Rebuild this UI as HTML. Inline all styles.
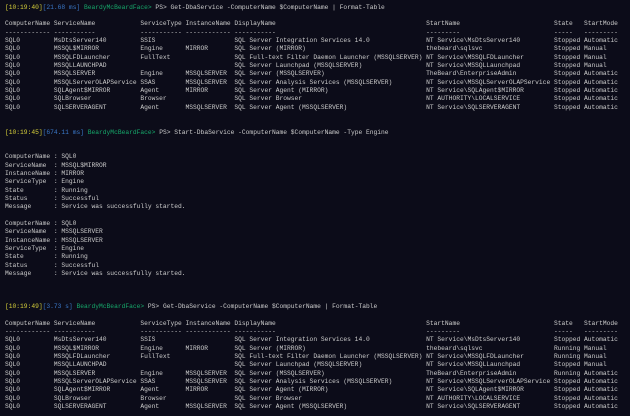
<!DOCTYPE html>
<html><head><meta charset="utf-8"><style>
html,body{margin:0;padding:0;background:#0c0c19;width:630px;height:416px;overflow:hidden}
pre{margin:0;position:absolute;left:5px;top:3.85px;font-family:"Liberation Mono",monospace;font-size:6.28px;line-height:8.306px;color:#cccccc;letter-spacing:0;white-space:pre}
.y{color:#d6cf3a}.b{color:#3a78c8}.g{color:#16a86a}
</style></head><body><pre><span class="y">[10:19:40]</span><span class="b">[21.68 ms]</span> <span class="g">BeardyMcBeardFace&gt;</span> PS&gt; Get-DbaService -ComputerName $ComputerName | Format-Table

ComputerName ServiceName            ServiceType InstanceName DisplayName                                        StartName                         State   StartMode
------------ -----------            ----------- ------------ -----------                                        ---------                         -----   ---------
SQL0         MsDtsServer140         SSIS                     SQL Server Integration Services 14.0               NT Service\MsDtsServer140         Stopped Automatic
SQL0         MSSQL$MIRROR           Engine      MIRROR       SQL Server (MIRROR)                                thebeard\sqlsvc                   Stopped Manual
SQL0         MSSQLFDLauncher        FullText                 SQL Full-text Filter Daemon Launcher (MSSQLSERVER) NT Service\MSSQLFDLauncher        Stopped Manual
SQL0         MSSQLLAUNCHPAD                                  SQL Server Launchpad (MSSQLSERVER)                 NT Service\MSSQLLaunchpad         Stopped Manual
SQL0         MSSQLSERVER            Engine      MSSQLSERVER  SQL Server (MSSQLSERVER)                           TheBeard\EnterpriseAdmin          Stopped Automatic
SQL0         MSSQLServerOLAPService SSAS        MSSQLSERVER  SQL Server Analysis Services (MSSQLSERVER)         NT Service\MSSQLServerOLAPService Stopped Automatic
SQL0         SQLAgent$MIRROR        Agent       MIRROR       SQL Server Agent (MIRROR)                          NT Service\SQLAgent$MIRROR        Stopped Automatic
SQL0         SQLBrowser             Browser                  SQL Server Browser                                 NT AUTHORITY\LOCALSERVICE         Stopped Automatic
SQL0         SQLSERVERAGENT         Agent       MSSQLSERVER  SQL Server Agent (MSSQLSERVER)                     NT Service\SQLSERVERAGENT         Stopped Automatic


<span class="y">[10:19:45]</span><span class="b">[674.11 ms]</span> <span class="g">BeardyMcBeardFace&gt;</span> PS&gt; Start-DbaService -ComputerName $ComputerName -Type Engine


ComputerName : SQL0
ServiceName  : MSSQL$MIRROR
InstanceName : MIRROR
ServiceType  : Engine
State        : Running
Status       : Successful
Message      : Service was successfully started.

ComputerName : SQL0
ServiceName  : MSSQLSERVER
InstanceName : MSSQLSERVER
ServiceType  : Engine
State        : Running
Status       : Successful
Message      : Service was successfully started.



<span class="y">[10:19:49]</span><span class="b">[3.73 s]</span> <span class="g">BeardyMcBeardFace&gt;</span> PS&gt; Get-DbaService -ComputerName $ComputerName | Format-Table

ComputerName ServiceName            ServiceType InstanceName DisplayName                                        StartName                         State   StartMode
------------ -----------            ----------- ------------ -----------                                        ---------                         -----   ---------
SQL0         MsDtsServer140         SSIS                     SQL Server Integration Services 14.0               NT Service\MsDtsServer140         Stopped Automatic
SQL0         MSSQL$MIRROR           Engine      MIRROR       SQL Server (MIRROR)                                thebeard\sqlsvc                   Running Manual
SQL0         MSSQLFDLauncher        FullText                 SQL Full-text Filter Daemon Launcher (MSSQLSERVER) NT Service\MSSQLFDLauncher        Running Manual
SQL0         MSSQLLAUNCHPAD                                  SQL Server Launchpad (MSSQLSERVER)                 NT Service\MSSQLLaunchpad         Stopped Manual
SQL0         MSSQLSERVER            Engine      MSSQLSERVER  SQL Server (MSSQLSERVER)                           TheBeard\EnterpriseAdmin          Running Automatic
SQL0         MSSQLServerOLAPService SSAS        MSSQLSERVER  SQL Server Analysis Services (MSSQLSERVER)         NT Service\MSSQLServerOLAPService Stopped Automatic
SQL0         SQLAgent$MIRROR        Agent       MIRROR       SQL Server Agent (MIRROR)                          NT Service\SQLAgent$MIRROR        Stopped Automatic
SQL0         SQLBrowser             Browser                  SQL Server Browser                                 NT AUTHORITY\LOCALSERVICE         Stopped Automatic
SQL0         SQLSERVERAGENT         Agent       MSSQLSERVER  SQL Server Agent (MSSQLSERVER)                     NT Service\SQLSERVERAGENT         Stopped Automatic</pre></body></html>
